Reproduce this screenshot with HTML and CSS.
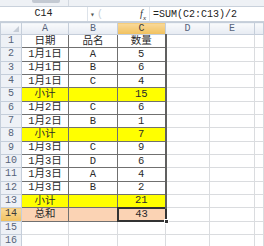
FILE: index.html
```html
<!DOCTYPE html>
<html lang="zh-CN">
  <head>
    <meta charset="utf-8">
    <title>小计与总和</title>
    <link rel="stylesheet" href="styles.css">
  </head>
  <body>
    <div class="ribbon"><span class="ribbon-label"></span><span class="ribbon-sep"></span></div>
    <div class="formula-bar">
      <div class="name-box">C14</div>
      <span class="drop">▾</span>
      <span class="grip">(</span>
      <span class="fx">f<sub>x</sub></span>
      <div class="formula">=SUM(C2:C13)/2</div>
    </div>
    <table class="sheet">
      <colgroup>
        <col class="c-hdr"><col class="c-a"><col class="c-b"><col class="c-c"><col class="c-d"><col class="c-e"><col>
      </colgroup>
      <tr class="col-heads">
        <th class="corner"><span class="tri"></span></th>
        <th>A</th><th>B</th><th class="active">C</th><th>D</th><th>E</th><th></th>
      </tr>
      <tr><th>1</th><td class="d">日期</td><td class="d">品名</td><td class="d qty">数量</td><td></td><td></td><td></td></tr>
      <tr><th>2</th><td class="d">1月1日</td><td class="d">A</td><td class="d qty">5</td><td></td><td></td><td></td></tr>
      <tr><th>3</th><td class="d">1月1日</td><td class="d">B</td><td class="d qty">6</td><td></td><td></td><td></td></tr>
      <tr><th>4</th><td class="d">1月1日</td><td class="d">C</td><td class="d qty">4</td><td></td><td></td><td></td></tr>
      <tr class="sub"><th>5</th><td class="d">小计</td><td class="d"></td><td class="d qty">15</td><td></td><td></td><td></td></tr>
      <tr><th>6</th><td class="d">1月2日</td><td class="d">C</td><td class="d qty">6</td><td></td><td></td><td></td></tr>
      <tr><th>7</th><td class="d">1月2日</td><td class="d">B</td><td class="d qty">1</td><td></td><td></td><td></td></tr>
      <tr class="sub"><th>8</th><td class="d">小计</td><td class="d"></td><td class="d qty">7</td><td></td><td></td><td></td></tr>
      <tr><th>9</th><td class="d">1月3日</td><td class="d">C</td><td class="d qty">9</td><td></td><td></td><td></td></tr>
      <tr><th>10</th><td class="d">1月3日</td><td class="d">D</td><td class="d qty">6</td><td></td><td></td><td></td></tr>
      <tr><th>11</th><td class="d">1月3日</td><td class="d">A</td><td class="d qty">4</td><td></td><td></td><td></td></tr>
      <tr><th>12</th><td class="d">1月3日</td><td class="d">B</td><td class="d qty">2</td><td></td><td></td><td></td></tr>
      <tr class="sub"><th>13</th><td class="d">小计</td><td class="d"></td><td class="d qty">21</td><td></td><td></td><td></td></tr>
      <tr class="total"><th class="active">14</th><td class="d">总和</td><td class="d"></td><td class="d qty selected">43<span class="handle"></span></td><td></td><td></td><td></td></tr>
      <tr><th>15</th><td></td><td></td><td></td><td></td><td></td><td></td></tr>
      <tr><th>16</th><td></td><td></td><td></td><td></td><td></td><td></td></tr>
    </table>
  </body>
</html>
```
FILE: styles.css
```css
* {
  margin: 0;
  padding: 0;
  box-sizing: border-box;
}

body {
  width: 264px;
  height: 246px;
  overflow: hidden;
  background: #fff;
  font-family: "Liberation Mono", "Noto Sans CJK SC", monospace;
  font-size: 11px;
  color: #222;
}

.ribbon {
  display: flex;
  height: 7px;
  background: #eef1f5;
  border-bottom: 1px solid #c9d1db;
}

.ribbon-label {
  width: 28px;
  height: 3px;
  margin: 0 0 0 32px;
  background: #c3c9d2;
  border-radius: 0 0 2px 2px;
}

.ribbon-sep {
  width: 1px;
  height: 6px;
  margin-left: 8px;
  background: #d2d8e0;
}

.formula-bar {
  display: flex;
  align-items: center;
  height: 15px;
  background: #fff;
  border-bottom: 1px solid #c9d1db;
}

.name-box {
  width: 88px;
  height: 14px;
  line-height: 13px;
  text-align: center;
  border-right: 1px solid #dde3ea;
  font-size: 10px;
}

.drop {
  width: 9px;
  font-size: 8px;
  color: #555;
  text-align: center;
}

.grip {
  width: 12px;
  color: #c8ced6;
  font-size: 10px;
}

.fx {
  width: 41px;
  text-align: right;
  padding-right: 3px;
  font-family: "Liberation Serif", serif;
  font-style: italic;
  font-size: 10px;
  color: #333;
  border-right: 1px solid #dde3ea;
  height: 14px;
  line-height: 13px;
}

.fx sub {
  font-size: 7px;
}

.formula {
  flex: 1;
  padding-left: 3px;
  font-size: 10px;
  line-height: 13px;
}

.sheet {
  border-collapse: collapse;
  table-layout: fixed;
  width: 264px;
}

.c-hdr { width: 21px; }
.c-a { width: 47px; }
.c-b { width: 49px; }
.c-c { width: 48px; }
.c-d { width: 44px; }
.c-e { width: 45px; }

.sheet tr {
  height: 13.33px;
}

.sheet tr.col-heads {
  height: 12px;
}

.sheet th {
  font-weight: normal;
  font-size: 10px;
  color: #56647a;
  background: #eef1f6;
  border: 1px solid #c5ceda;
  line-height: 10px;
  padding: 0;
}

.col-heads th {
  background: linear-gradient(#f9fafc, #e6ebf2);
}

.sheet th.active {
  background: linear-gradient(#f9d99a, #f1c15d);
  color: #3a3a3a;
}

.corner {
  position: relative;
}

.tri {
  position: absolute;
  right: 2px;
  bottom: 2px;
  border-left: 6px solid transparent;
  border-bottom: 6px solid #c5ccd6;
}

.sheet td {
  border: 1px solid #dadcdf;
  text-align: center;
  font-size: 10.5px;
  line-height: 11px;
  padding: 0;
  white-space: nowrap;
  overflow: hidden;
  color: #2a2a2a;
}

.sheet td.d {
  border: 1px solid #707070;
}

.sheet td.qty {
  border-right: 2px solid #606060;
}

.sub td.d {
  background: #ffff00;
}

.total td.d {
  background: #fbd3b4;
}

.sheet td.selected {
  position: relative;
  overflow: visible;
  border: 2px solid #333;
}

.handle {
  position: absolute;
  right: -4px;
  bottom: -4px;
  width: 5px;
  height: 5px;
  background: #333;
  border: 1px solid #fff;
}
```
